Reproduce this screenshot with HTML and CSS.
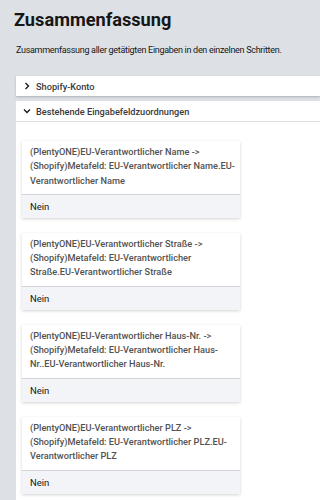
FILE: index.html
```html
<!DOCTYPE html>
<html lang="de">
<head>
<meta charset="utf-8">
<link rel="stylesheet" href="styles.css">
</head>
<body>
<div class="page">
  <h1 class="title">Zusammenfassung</h1>
  <p class="subtitle">Zusammenfassung aller getätigten Eingaben in den einzelnen Schritten.</p>
  <div class="panel">
    <div class="acc acc-closed">
      <div class="acc-head">
        <svg class="chev" width="8" height="8" viewBox="0 0 8 8"><path d="M2.5 1 L5.5 4 L2.5 7" fill="none" stroke="#161616" stroke-width="1.3"/></svg>
        <span>Shopify-Konto</span>
      </div>
    </div>
    <div class="acc acc-open">
      <div class="acc-head">
        <svg class="chev" width="8" height="8" viewBox="0 0 8 8"><path d="M1 2.5 L4 5.5 L7 2.5" fill="none" stroke="#161616" stroke-width="1.3"/></svg>
        <span>Bestehende Eingabefeldzuordnungen</span>
      </div>
      <div class="acc-body">
        <div class="card">
          <div class="card-text">(PlentyONE)EU-Verantwortlicher Name -&gt; (Shopify)Metafeld: EU-Verantwortlicher Name.EU-Verantwortlicher Name</div>
          <div class="card-val">Nein</div>
        </div>
        <div class="card">
          <div class="card-text">(PlentyONE)EU-Verantwortlicher Straße -&gt; (Shopify)Metafeld: EU-Verantwortlicher Straße.EU-Verantwortlicher Straße</div>
          <div class="card-val">Nein</div>
        </div>
        <div class="card">
          <div class="card-text">(PlentyONE)EU-Verantwortlicher Haus-Nr. -&gt; (Shopify)Metafeld: EU-Verantwortlicher Haus-Nr..EU-Verantwortlicher Haus-Nr.</div>
          <div class="card-val">Nein</div>
        </div>
        <div class="card">
          <div class="card-text">(PlentyONE)EU-Verantwortlicher PLZ -&gt; (Shopify)Metafeld: EU-Verantwortlicher PLZ.EU-Verantwortlicher PLZ</div>
          <div class="card-val">Nein</div>
        </div>
      </div>
    </div>
  </div>
</div>
</body>
</html>
```
FILE: styles.css
```css
html, body {
  margin: 0;
  padding: 0;
  background: #dde1e6;
  font-family: Roboto, "Liberation Sans", sans-serif;
  color: #161616;
}
.page {
  padding: 8px 0 0 0;
  height: 492px;
  overflow: hidden;
}
.title {
  margin: 0 0 0 14px;
  font-size: 18.2px;
  font-weight: 700;
  line-height: 24px;
  color: #161616;
}
.subtitle {
  margin: 11px 0 0 16px;
  font-size: 9px;
  letter-spacing: -0.3px;
  line-height: 14px;
  color: #161616;
}
.panel {
  margin: 19px 0 0 16px;
  display: flex;
  flex-direction: column;
  gap: 5px;
}
.acc {
  background: #fff;
}
.acc-closed {
  box-shadow: 0 1px 2px rgba(0,0,0,0.22);
}
.acc-head {
  height: 20px;
  display: flex;
  align-items: center;
  gap: 5px;
  padding-left: 7px;
  font-size: 9.2px;
  font-weight: 500;
  color: #393939;
}
.acc-open .acc-head {
  border-bottom: 1px solid #e0e0e0;
}
.chev {
  flex: none;
}
.acc-body {
  padding: 19px 0 40px 6px;
  display: flex;
  flex-direction: column;
  gap: 15px;
}
.card {
  width: 218px;
  background: #fff;
  box-shadow: 0 1px 3px rgba(0,0,0,0.18);
}
.card-text {
  padding: 4px 5px 6px 8px;
  font-size: 9.2px;
  font-weight: 500;
  line-height: 14.3px;
  color: #525252;
  border-bottom: 1px solid #d0d4d9;
}
.card-val {
  background: #f2f4f8;
  height: 23px;
  display: flex;
  align-items: center;
  padding-left: 8px;
  font-size: 9.5px;
  color: #161616;
}
```
